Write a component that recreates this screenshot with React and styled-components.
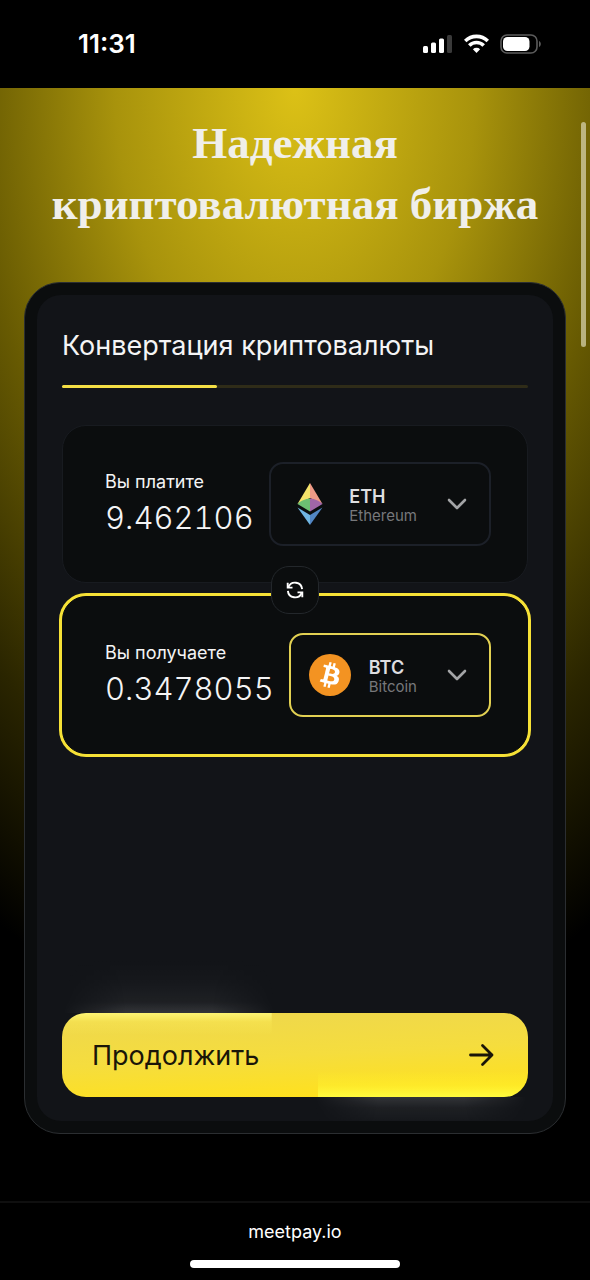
import React, { useState } from "react";
import styled, { createGlobalStyle } from "styled-components";

const GlobalStyle = createGlobalStyle`
  *, *::before, *::after { box-sizing: border-box; }
  html, body, #root { min-height: 100%; }
  body { margin: 0; background: #000; font-family: Inter, "Noto Sans", sans-serif; color: #f4f4f5; }
  button, input { font: inherit; color: inherit; margin: 0; }
`;

const Screen = styled.div`
  min-height: 100vh;
  display: flex;
  flex-direction: column;
`;

const StatusBar = styled.header`
  height: 88px;
  padding: 0 48px 0 78px;
  display: flex;
  align-items: center;
  justify-content: space-between;
  background: #000;
`;

const Clock = styled.time`
  font-size: 26px;
  line-height: 32px;
  font-weight: 600;
  color: #fff;
`;

const StatusIcons = styled.div`
  display: flex;
  align-items: center;
  gap: 11px;
`;

const Page = styled.main`
  position: relative;
  flex: 1;
  display: flex;
  flex-direction: column;
  padding: 25px 24px 67px;
  background: radial-gradient(600px 960px at 50% 0, #dcc116 0%, #a8930c 30%, #675a02 54%, #2a2500 78%, #000 100%);
`;

const ScrollThumb = styled.div`
  position: absolute;
  top: 34px;
  right: 4px;
  width: 5px;
  height: 225px;
  border-radius: 3px;
  background: rgba(214, 208, 170, 0.75);
`;

const Heading = styled.h1`
  margin: 0 0 47px;
  font-family: "Liberation Serif", serif;
  font-size: 45px;
  line-height: 61px;
  font-weight: 700;
  text-align: center;
  color: #f0efea;
`;

const Card = styled.section`
  flex: 1;
  display: flex;
  padding: 12px;
  border: 1px solid #2b2e31;
  border-radius: 36px;
  background: #0b0d0e;
`;

const CardBody = styled.form`
  flex: 1;
  min-width: 0;
  display: flex;
  flex-direction: column;
  padding: 32px 25px 24px;
  border-radius: 24px;
  background: #121418;
`;

const CardTitle = styled.h2`
  margin: 0 0 20px;
  font-size: 27px;
  line-height: 38px;
  font-weight: 400;
`;

const Track = styled.div`
  height: 3px;
  margin-bottom: 37px;
  border-radius: 2px;
  background: #2f2c18;
`;

const TrackFill = styled.div`
  width: 33.3%;
  height: 100%;
  border-radius: 2px;
  background: #f4df45;
`;

const Exchange = styled.div`
  position: relative;
  display: flex;
  flex-direction: column;
  gap: 13px;
  margin-bottom: auto;
`;

const CurrencyBox = styled.div`
  display: flex;
  align-items: center;
  gap: 16px;
  padding: 36px 36px 36px 42px;
  border: 1px solid ${(p) => (p.$active ? "#0b0d0e" : "#181b20")};
  border-radius: 24px;
  background: #0b0d0e;
  box-shadow: ${(p) => (p.$active ? "0 0 0 3px #f6e136" : "none")};
`;

const Amount = styled.label`
  flex: 1;
  min-width: 0;
  display: flex;
  flex-direction: column;
`;

const AmountLabel = styled.span`
  font-size: 18px;
  line-height: 24px;
  white-space: nowrap;
`;

const AmountInput = styled.input`
  width: 100%;
  height: 44px;
  padding: 2px 0 0;
  border: 0;
  outline: 0;
  background: transparent;
  font-size: 31px;
  line-height: 40px;
  font-weight: 300;
  font-variant-numeric: tabular-nums;
`;

const CoinButton = styled.button`
  height: 84px;
  display: flex;
  align-items: center;
  gap: 18px;
  padding: 0 22px 0 18px;
  border: 2px solid ${(p) => (p.$active ? "#e2d052" : "#1c2028")};
  border-radius: 14px;
  background: transparent;
  text-align: left;
  cursor: pointer;
`;

const CoinText = styled.span`
  display: flex;
  flex-direction: column;
  padding-top: 4px;
  margin-right: 12px;
`;

const CoinCode = styled.span`
  font-size: 18px;
  line-height: 20px;
  font-weight: 600;
  color: #dedee0;
`;

const CoinName = styled.span`
  font-size: 15px;
  line-height: 18px;
  color: #77787b;
`;

const SwapButton = styled.button`
  position: absolute;
  top: 50%;
  left: 50%;
  width: 48px;
  height: 48px;
  transform: translate(-50%, -50%);
  display: grid;
  place-items: center;
  padding: 0;
  border: 1px solid #23272b;
  border-radius: 18px;
  background: #0b0d0e;
  color: #fff;
  cursor: pointer;
`;

const ContinueButton = styled.button`
  position: relative;
  height: 84px;
  display: flex;
  align-items: center;
  justify-content: space-between;
  padding: 0 34px 0 30px;
  border: 0;
  border-radius: 24px;
  background:
    linear-gradient(rgba(255, 248, 120, 0.9), rgba(255, 240, 90, 0.3) 40%, rgba(255, 240, 90, 0)) 0 0 / 45% 22px no-repeat,
    linear-gradient(to top, rgba(255, 252, 64, 0.95), rgba(255, 246, 50, 0.4) 45%, rgba(255, 240, 40, 0)) 100% 100% / 45% 26px no-repeat,
    linear-gradient(177deg, #efd84b 10%, #f5dd3e 50%, #ffe11c 92%);
  color: #1a1508;
  font-size: 27px;
  cursor: pointer;

  &::before,
  &::after {
    content: "";
    position: absolute;
    width: 46%;
    pointer-events: none;
    mask-image: linear-gradient(90deg, transparent, #000 30%, #000 70%, transparent);
  }

  &::before {
    left: 0;
    bottom: 100%;
    height: 56px;
    background: linear-gradient(to top, rgba(255, 255, 255, 0.14), rgba(255, 255, 255, 0.05) 20%, rgba(255, 255, 255, 0.02) 55%, transparent);
  }

  &::after {
    right: 0;
    top: 100%;
    height: 24px;
    background: linear-gradient(rgba(255, 255, 255, 0.14), rgba(255, 255, 255, 0.05) 45%, rgba(255, 255, 255, 0.02));
  }
`;

const Footer = styled.footer`
  display: flex;
  flex-direction: column;
  align-items: center;
  gap: 16px;
  padding: 17px 0 12px;
  border-top: 2px solid #0f0f0f;
  background: #000;
`;

const SiteLink = styled.a`
  font-size: 18px;
  line-height: 24px;
  color: #fff;
  text-decoration: none;
`;

const HomeIndicator = styled.div`
  width: 210px;
  height: 8px;
  border-radius: 4px;
  background: #fff;
`;

const SignalIcon = () => (
  <svg width="30" height="20" viewBox="0 0 30 20" aria-hidden="true">
    <rect x="0" y="12" width="5" height="7" rx="1.5" fill="#fff" />
    <rect x="8" y="8.5" width="5" height="10.5" rx="1.5" fill="#fff" />
    <rect x="16" y="4.5" width="5" height="14.5" rx="1.5" fill="#fff" />
    <rect x="24" y="1" width="5" height="18" rx="1.5" fill="#3a3a3a" />
  </svg>
);

const WifiIcon = () => (
  <svg width="25" height="20" viewBox="0 0 25 20" fill="none" stroke="#fff" strokeWidth="3.6" aria-hidden="true">
    <path d="M1.200 7a16 16 0 0 1 22.600 0" />
    <path d="M5.300 11.500a10.200 10.200 0 0 1 14.400 0" />
    <path d="M8.900 15.300a5.100 5.100 0 0 1 7.200 0L12.500 19z" fill="#fff" stroke="none" />
  </svg>
);

const BatteryIcon = () => (
  <svg width="42" height="20" viewBox="0 0 42 20" aria-hidden="true">
    <rect x="1" y="1" width="36" height="18" rx="6" fill="none" stroke="#5c5c5c" strokeWidth="1.6" />
    <rect x="3" y="3" width="26.5" height="14" rx="4.5" fill="#fff" />
    <path d="M39 7v6c2.400-1 2.400-5 0-6z" fill="#5c5c5c" />
  </svg>
);

const EthIcon = () => (
  <svg width="42" height="42" viewBox="0 0 42 42" aria-hidden="true">
    <path d="M21 0v15L8.500 21z" fill="#f5e36a" />
    <path d="M21 0v15l12.500 6z" fill="#ee9a86" />
    <path d="M21 15.500v13L8.500 21q5-5 12.500-5.500z" fill="#6cbf72" />
    <path d="M21 15.500v13L33.500 21q-5-5-12.500-5.500z" fill="#a166a8" />
    <path d="M8.500 24.500L21 32v10z" fill="#70b5e2" />
    <path d="M33.500 24.500L21 32v10z" fill="#5286c4" />
  </svg>
);

const BtcIcon = () => (
  <svg width="42" height="42" viewBox="0 0 32 32" aria-hidden="true">
    <circle cx="16" cy="16" r="16" fill="#f39322" />
    <path
      fill="#fff"
      d="M23.189 14.020c.314-2.096-1.283-3.223-3.465-3.975l.708-2.840-1.728-.430-.690 2.765c-.454-.114-.920-.220-1.385-.326l.695-2.783L15.596 6l-.708 2.839c-.376-.086-.746-.170-1.104-.260l.002-.009-2.384-.595-.460 1.846s1.283.294 1.256.312c.700.175.826.638.805 1.006l-.806 3.235c.048.012.110.030.180.057l-.183-.045-1.130 4.532c-.086.212-.303.531-.793.410.018.025-1.256-.313-1.256-.313l-.858 1.978 2.250.561c.418.105.828.215 1.231.318l-.715 2.872 1.727.430.708-2.840c.472.127.930.245 1.378.357l-.706 2.828 1.728.430.715-2.866c2.948.558 5.164.333 6.097-2.333.752-2.146-.037-3.385-1.588-4.192 1.130-.260 1.980-1.003 2.207-2.538zm-3.950 5.538c-.533 2.147-4.148.986-5.320.695l.950-3.805c1.172.293 4.929.872 4.370 3.110zm.535-5.569c-.487 1.953-3.495.960-4.470.717l.860-3.450c.975.243 4.118.696 3.610 2.733z"
    />
  </svg>
);

const ChevronIcon = () => (
  <svg width="20" height="12" viewBox="0 0 20 12" fill="none" stroke="#a3a4a6" strokeWidth="2.6" strokeLinecap="round" strokeLinejoin="round" aria-hidden="true">
    <path d="M2 2l8 8 8-8" />
  </svg>
);

const SwapIcon = () => (
  <svg width="18" height="18" viewBox="0 0 18 18" fill="none" stroke="currentColor" strokeWidth="1.9" aria-hidden="true">
    <path d="M1.700 1.800v4.800h4.800" />
    <path d="M2.400 6.200A7.100 7.100 0 0 1 16.100 8.200" />
    <path d="M16.300 16.200v-4.800h-4.800" />
    <path d="M15.600 11.800A7.100 7.100 0 0 1 1.900 9.800" />
  </svg>
);

const ArrowIcon = () => (
  <svg width="26" height="24" viewBox="0 0 26 24" fill="none" stroke="currentColor" strokeWidth="2.8" strokeLinecap="round" strokeLinejoin="round" aria-hidden="true">
    <path d="M2.500 12H24M14.500 2.500L24 12l-9.500 9.500" />
  </svg>
);

const coins = {
  eth: { code: "ETH", name: "Ethereum", Icon: EthIcon },
  btc: { code: "BTC", name: "Bitcoin", Icon: BtcIcon },
};

function CurrencyRow({ label, value, onChange, coin, active }) {
  const { code, name, Icon } = coins[coin];
  return (
    <CurrencyBox $active={active}>
      <Amount>
        <AmountLabel>{label}</AmountLabel>
        <AmountInput inputMode="decimal" size={1} value={value} onChange={(e) => onChange(e.target.value)} />
      </Amount>
      <CoinButton type="button" $active={active} aria-haspopup="listbox">
        <Icon />
        <CoinText>
          <CoinCode>{code}</CoinCode>
          <CoinName>{name}</CoinName>
        </CoinText>
        <ChevronIcon />
      </CoinButton>
    </CurrencyBox>
  );
}

export default function App() {
  const [pay, setPay] = useState("9.462106");
  const [receive, setReceive] = useState("0.3478055");
  const [pair, setPair] = useState(["eth", "btc"]);

  const swap = () => {
    setPair([pair[1], pair[0]]);
    setPay(receive);
    setReceive(pay);
  };

  return (
    <>
      <GlobalStyle />
      <Screen>
        <StatusBar>
          <Clock>11:31</Clock>
          <StatusIcons>
            <SignalIcon />
            <WifiIcon />
            <BatteryIcon />
          </StatusIcons>
        </StatusBar>
        <Page>
          <Heading>Надежная криптовалютная биржа</Heading>
          <Card>
            <CardBody onSubmit={(e) => e.preventDefault()}>
              <CardTitle>Конвертация криптовалюты</CardTitle>
              <Track>
                <TrackFill />
              </Track>
              <Exchange>
                <CurrencyRow label="Вы платите" value={pay} onChange={setPay} coin={pair[0]} />
                <CurrencyRow label="Вы получаете" value={receive} onChange={setReceive} coin={pair[1]} active />
                <SwapButton type="button" aria-label="Поменять местами" onClick={swap}>
                  <SwapIcon />
                </SwapButton>
              </Exchange>
              <ContinueButton type="submit">
                Продолжить
                <ArrowIcon />
              </ContinueButton>
            </CardBody>
          </Card>
          <ScrollThumb />
        </Page>
        <Footer>
          <SiteLink href="https://meetpay.io">meetpay.io</SiteLink>
          <HomeIndicator />
        </Footer>
      </Screen>
    </>
  );
}
